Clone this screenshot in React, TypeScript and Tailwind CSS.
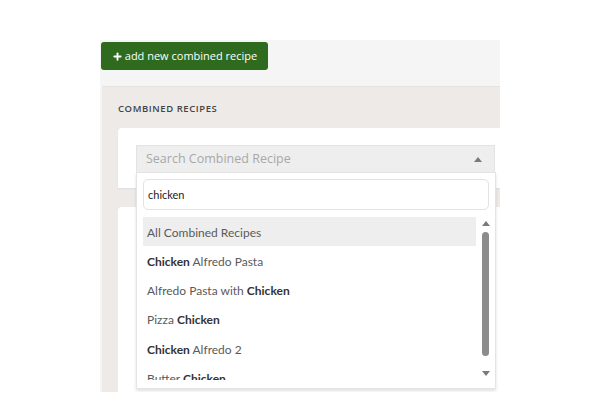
import { Plus } from "lucide-react";

const font = { fontFamily: '"Open Sans", "Liberation Sans", sans-serif' };
const listFont = { fontFamily: 'Lato, "Open Sans", sans-serif' };

const options: { parts: [string, boolean][] }[] = [
	{ parts: [["Chicken", true], [" Alfredo Pasta", false]] },
	{ parts: [["Alfredo Pasta with ", false], ["Chicken", true]] },
	{ parts: [["Pizza ", false], ["Chicken", true]] },
	{ parts: [["Chicken", true], [" Alfredo 2", false]] },
	{ parts: [["Butter ", false], ["Chicken", true]] },
];

function Triangle({ up }: { up: boolean }) {
	return (
		<svg width="8" height="5" viewBox="0 0 8 5" className="block">
			<path d={up ? "M0 5 L4 0 L8 5 Z" : "M0 0 L4 5 L8 0 Z"} fill="#7a7a7a" />
		</svg>
	);
}

function Dropdown() {
	return (
		<div className="absolute left-[34px] top-[85px] flex h-[217px] w-[360px] flex-col border border-[#e4e4e4] bg-white shadow-[0_2px_3px_rgba(0,0,0,0.12)]">
			<div className="px-[6px] pt-[6px]">
				<div
					className="flex h-[31px] items-center rounded-[5px] border border-[#e3e3e3] px-[4px] pt-[2px] text-[11px] text-[#222]"
					style={listFont}
				>
					chicken
				</div>
			</div>
			<div className="mt-[7px] flex min-h-0 flex-1 pb-[8px] pl-[6px]" style={listFont}>
				<div className="min-h-0 flex-1 overflow-hidden text-[12px] text-[#5a5a5a]">
					<div className="flex h-[29px] items-center bg-[#eeeeee] px-[4px] pt-[2px]">
						All Combined Recipes
					</div>
					{options.map((o, i) => (
						<div key={i} className="flex h-[29.3px] items-center px-[4px] pt-[2px] whitespace-pre">
							{o.parts.map(([t, b], j) =>
								b ? (
									<span key={j} className="font-bold text-[#333]">
										{t}
									</span>
								) : (
									<span key={j}>{t}</span>
								),
							)}
						</div>
					))}
				</div>
				<div className="flex w-[19px] flex-col items-center pt-[4px] pb-[4px]">
					<Triangle up />
					<div className="mt-[6px] w-[7px] flex-1 rounded-full bg-[#8c8c8c]" />
					<div className="mt-[15px]">
						<Triangle up={false} />
					</div>
				</div>
			</div>
		</div>
	);
}

export default function App() {
	return (
		<div className="h-[400px] w-[600px] overflow-hidden bg-white" style={font}>
			<div className="ml-[100px] mt-[40px] h-[352px] w-[400px] overflow-hidden bg-[#f5f5f5]">
				<div className="pl-[1px] pt-[2px]">
					<button className="flex h-[28px] w-[167px] items-center justify-center gap-[2px] rounded-[3px] bg-[#2f6b1f] text-[11px] text-white">
						<Plus size={11} strokeWidth={4} />
						add new combined recipe
					</button>
				</div>
				<div className="relative ml-[2px] mt-[16px] h-[306px] border-t border-[#e6e2e0] bg-[#eeeae8] pl-[16px]">
					<div className="flex h-[41px] items-center pt-[4px] text-[9.5px] font-semibold tracking-[0.06em] text-[#444]">
						COMBINED RECIPES
					</div>
					<div className="h-[60px] rounded-tl-[4px] bg-white pl-[18px] pt-[17px] shadow-[0_1px_2px_rgba(0,0,0,0.06)]">
						<div className="flex h-[28px] w-[359px] items-center justify-between border border-[#e3e3e3] bg-[#eeeeee] pl-[9px] pr-[12px] text-[12.5px] text-[#a8a8a8]">
							Search Combined Recipe
							<Triangle up />
						</div>
					</div>
					<div className="mt-[19px] h-[200px] rounded-tl-[4px] bg-white" />
					<Dropdown />
				</div>
			</div>
		</div>
	);
}
